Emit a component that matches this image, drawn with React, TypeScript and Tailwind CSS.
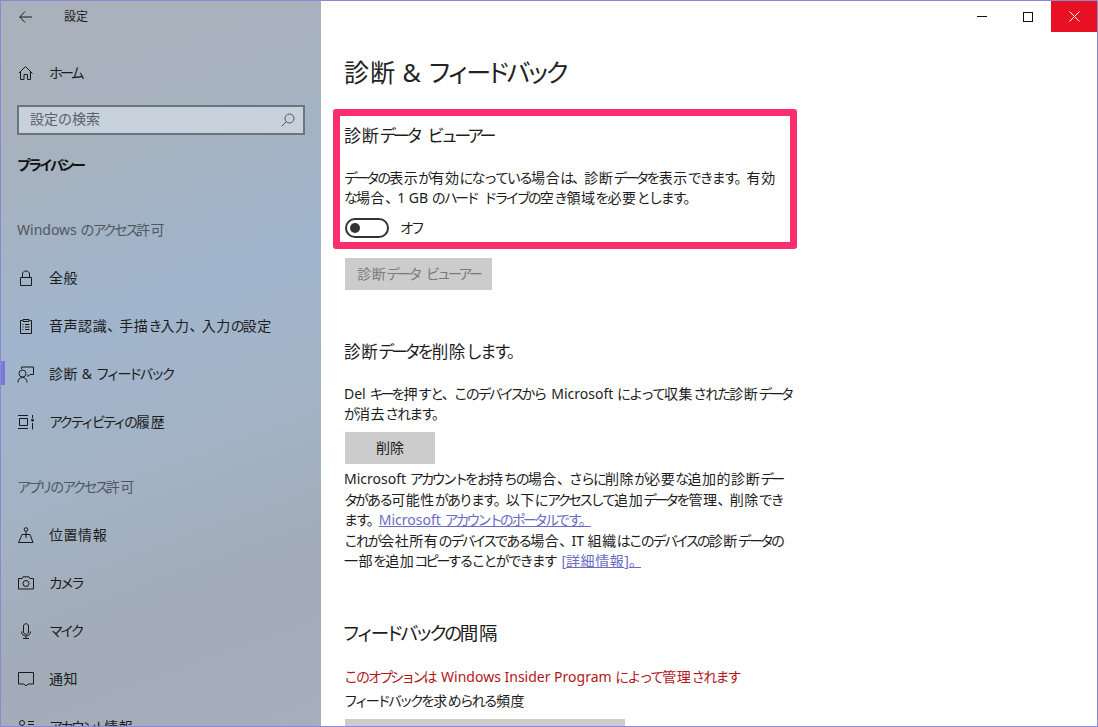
const font = 'font-["Noto_Sans","Noto_Sans_CJK_JP",sans-serif]';

// the reference font has narrow kana next to full width kanji, so kana runs get tighter tracking
const Jp = ({ t }: { t: string }) => {
  const runs = t.split(/([\u30A0-\u30FF]+|[\u3040-\u309F、。]+|[\u4E00-\u9FFF]+)/).filter(Boolean);
  return (
    <>
      {runs.map((run, i) => {
        // keep the word gap when a tightened run is followed by a space
        const gap = runs[i + 1]?.startsWith(" ");
        if (/^[\u30A0-\u30FF]/.test(run))
          return <span key={i} className={gap ? "pr-[0.2em] tracking-[-0.21em]" : "tracking-[-0.21em]"}>{run}</span>;
        if (/^[\u3040-\u309F、。]/.test(run))
          return <span key={i} className={gap ? "pr-[0.14em] tracking-[-0.14em]" : "tracking-[-0.14em]"}>{run}</span>;
        if (/^[\u4E00-\u9FFF]/.test(run))
          return <span key={i} className="tracking-[0.04em]">{run}</span>;
        return <span key={i}>{run}</span>;
      })}
    </>
  );
};

const HomeIcon = () => (
  <svg width="16" height="16" viewBox="0 0 16 16" fill="none" stroke="#1a1a1a" strokeWidth="1">
    <path d="M1 8 L7.5 1.5 L14.5 8.5 M2.5 6.8 V14.5 H6 V9.5 H9.5 V14.5 H12.5 V6.8" />
  </svg>
);
const LockIcon = () => (
  <svg width="16" height="16" viewBox="0 0 16 16" fill="none" stroke="#1a1a1a" strokeWidth="1">
    <path d="M2.5 7.5 H13.5 V15.5 H2.5 Z M4.5 7.5 V4 C4.5 0 11.5 0 11.5 4 V7.5" />
  </svg>
);
const ClipboardIcon = () => (
  <svg width="16" height="16" viewBox="0 0 16 16" fill="none" stroke="#1a1a1a" strokeWidth="1">
    <path d="M4.5 2.5 H2.5 V15.5 H13.5 V2.5 H11.5 M5 3.5 V1.5 H11 V3.5 Z M7 6.5 H11.5 M7 9 H11.5 M7 11.5 H11.5 M4.5 6.5 H5.5 M4.5 9 H5.5 M4.5 11.5 H5.5" />
  </svg>
);
const FeedbackIcon = () => (
  <svg width="17" height="17" viewBox="0 0 17 17" fill="none" stroke="#1a1a1a" strokeWidth="1">
    <path d="M4.5 3 V1 H16.5 V8.5 H13 L11 10.5 V8.5 M1 16.5 C1 13 3 11.5 5.5 11.5 C8 11.5 10 13 10 16.5" />
    <circle cx="5.5" cy="7.5" r="3.5" />
  </svg>
);
const TimelineIcon = () => (
  <svg width="16" height="16" viewBox="0 0 16 16" fill="none" stroke="#1a1a1a" strokeWidth="1">
    <path d="M0 1.5 H10 M0 14.5 H10 M1.5 4.5 H9.5 V11.5 H1.5 Z M14.5 1 V4 M14.5 9 V15.5" />
    <circle cx="14.5" cy="6.2" r="1" fill="#1a1a1a" />
  </svg>
);
const LocationIcon = () => (
  <svg width="16" height="16" viewBox="0 0 16 16" fill="none" stroke="#1a1a1a" strokeWidth="1">
    <circle cx="8" cy="2.5" r="1.8" />
    <path d="M8 4.5 V11 M4 7.5 H12 L15 15.5 H0.5 L4 7.5" />
  </svg>
);
const CameraIcon = () => (
  <svg width="16" height="14" viewBox="0 0 16 14" fill="none" stroke="#1a1a1a" strokeWidth="1">
    <path d="M0.5 2.5 H4 L5 0.8 H11 L12 2.5 H15.5 V13 H0.5 Z" />
    <circle cx="8" cy="7.5" r="3" />
  </svg>
);
const MicIcon = () => (
  <svg width="16" height="16" viewBox="0 0 16 16" fill="none" stroke="#1a1a1a" strokeWidth="1">
    <path d="M5.5 3 C5.5 0 10.5 0 10.5 3 V9 C10.5 12 5.5 12 5.5 9 Z M3.5 8.5 C3.5 14.5 12.5 14.5 12.5 8.5 M8 13 V15.5 M5 15.5 H11" />
  </svg>
);
const NotifyIcon = () => (
  <svg width="16" height="16" viewBox="0 0 16 16" fill="none" stroke="#1a1a1a" strokeWidth="1">
    <path d="M0.5 1.5 H15.5 V13 H10 L8 15 L6 13 H0.5 Z" />
  </svg>
);
const AccountIcon = () => (
  <svg width="16" height="16" viewBox="0 0 16 16" fill="none" stroke="#1a1a1a" strokeWidth="1">
    <circle cx="4" cy="4" r="2.5" />
    <path d="M0.5 12 C0.5 8 7.5 8 7.5 12 M10 2.5 H16 M10 5.5 H16 M10 8.5 H16" />
  </svg>
);

const NavItem = ({ icon, label, active }: { icon: React.ReactNode; label: string; active?: boolean }) => (
  <div className="relative flex h-12 items-center">
    {active && <span className="absolute left-0 top-[11px] h-6 w-1 bg-[#7a78d8]" />}
    <span className="flex w-[48px] shrink-0 justify-center pl-[1px]">{icon}</span>
    <span className="whitespace-pre pb-[2px] text-[14px] text-[#1c1c1c]"><Jp t={label} /></span>
  </div>
);

const SectionLabel = ({ text, className }: { text: string; className: string }) => (
  <div className={`pl-[16px] text-[14px] leading-5 text-[#4f5760] ${className}`}><Jp t={text} /></div>
);

const Link = ({ t }: { t: string }) => (
  <span className="text-[#6b6bc4] underline"><Jp t={t} /></span>
);

export default function App() {
  return (
    <div className={`flex h-[727px] w-[1098px] overflow-hidden border border-[#8a8ad2] ${font}`}>
      <aside className="flex w-[320px] shrink-0 flex-col overflow-hidden bg-[linear-gradient(160deg,#a9b1ba_0%,#a6b2bf_22%,#a0b5cd_42%,#a3b3c6_58%,#a2acb8_80%,#a6aebb_100%)]">
        <div className="flex h-[32px] shrink-0 items-center">
          <svg className="ml-[18px]" width="13" height="12" viewBox="0 0 13 12" fill="none" stroke="#1a1a1a" strokeWidth="1">
            <path d="M6 0.5 L0.8 6 L6 11.5 M0.8 6 H13" />
          </svg>
          <span className="ml-[32px] text-[12px] text-[#1c1c1c]">設定</span>
        </div>
        <div className="mt-[16px]">
          <NavItem icon={<HomeIcon />} label="ホーム" />
        </div>
        <div className="mx-[16px] mt-[8px] flex h-[30px] shrink-0 items-center justify-between border-2 border-[#6c747d] bg-[#c7d1dc] pl-[11px] pr-[8px]">
          <span className="pb-[3px] text-[14px] text-[#59616b]">設定の検索</span>
          <svg width="14" height="14" viewBox="0 0 14 14" fill="none" stroke="#4f5760" strokeWidth="1">
            <circle cx="8.5" cy="5.5" r="4.5" />
            <path d="M5.2 8.8 L0.7 13.3" />
          </svg>
        </div>
        <div className="mt-[20px] pl-[16px] text-[14px] font-bold leading-5 text-[#111]"><Jp t="プライバシー" /></div>
        <SectionLabel text="Windows のアクセス許可" className="mt-[45px]" />
        <div className="mt-[14px]">
          <NavItem icon={<LockIcon />} label="全般" />
          <NavItem icon={<ClipboardIcon />} label="音声認識、手描き入力、入力の設定" />
          <NavItem icon={<FeedbackIcon />} label="診断 & フィードバック" active />
          <NavItem icon={<TimelineIcon />} label="アクティビティの履歴" />
        </div>
        <SectionLabel text="アプリのアクセス許可" className="mt-[31px]" />
        <div className="mt-[14px]">
          <NavItem icon={<LocationIcon />} label="位置情報" />
          <NavItem icon={<CameraIcon />} label="カメラ" />
          <NavItem icon={<MicIcon />} label="マイク" />
          <NavItem icon={<NotifyIcon />} label="通知" />
          <NavItem icon={<AccountIcon />} label="アカウント情報" />
        </div>
      </aside>

      <main className="relative flex-1 overflow-hidden bg-white text-[#1c1c1c]">
        <div className="flex h-[31px] justify-end">
          <div className="flex w-[46px] items-center justify-center">
            <span className="h-px w-[10px] bg-[#111]" />
          </div>
          <div className="flex w-[46px] items-center justify-center">
            <span className="h-[10px] w-[10px] border border-[#111]" />
          </div>
          <div className="flex w-[46px] items-center justify-center bg-[#e81123]">
            <svg width="11" height="11" viewBox="0 0 11 11" stroke="#fff" strokeWidth="1">
              <path d="M0.5 0.5 L10.5 10.5 M10.5 0.5 L0.5 10.5" />
            </svg>
          </div>
        </div>

        <div className="w-[480px] whitespace-nowrap pl-[23px]">
          <h1 className="mt-[15px] text-[25px] font-normal leading-[50px] text-[#222]"><Jp t="診断 & フィードバック" /></h1>

          <h2 className="mt-[27px] text-[17px] font-normal leading-6"><Jp t="診断データ ビューアー" /></h2>
          <p className="mt-[20px] text-[14px] leading-[20px]">
            <Jp t="データの表示が有効になっている場合は、診断データを表示できます。有効" />
            <br />
            <Jp t="な場合、1 GB のハード ドライブの空き領域を必要とします。" />
          </p>
          <div className="ml-px mt-[10px] flex items-center">
            <span className="flex h-[20px] w-[44px] items-center rounded-full border-2 border-[#333] pl-[3px]">
              <span className="h-[10px] w-[10px] rounded-full bg-[#333]" />
            </span>
            <span className="ml-[11px] text-[14px] leading-5"><Jp t="オフ" /></span>
          </div>
          <div className="ml-px mt-[20px] flex h-8 w-[147px] items-center justify-center bg-[#cccccc] text-[14px] text-[#7a7a7a]">
            <span className="pb-[2px]"><Jp t="診断データ ビューアー" /></span>
          </div>

          <h2 className="mt-[49px] text-[16.5px] font-normal leading-[26px]"><Jp t="診断データを削除します。" /></h2>
          <p className="mt-[19px] text-[14px] leading-[20px]">
            <Jp t="Del キーを押すと、このデバイスから Microsoft によって収集された診断データ" />
            <br />
            <Jp t="が消去されます。" />
          </p>
          <div className="ml-px mt-[8px] flex h-8 w-[90px] items-center justify-center bg-[#cccccc] pb-[2px] text-[14px]">削除</div>
          <p className="mt-[5px] text-[14px] leading-[20.5px]">
            <Jp t="Microsoft アカウントをお持ちの場合、さらに削除が必要な追加的診断デー" />
            <br />
            <Jp t="タがある可能性があります。以下にアクセスして追加データを管理、削除でき" />
            <br />
            <Jp t="ます。" /><Link t="Microsoft アカウントのポータルです。" />
            <br />
            <Jp t="これが会社所有のデバイスである場合、IT 組織はこのデバイスの診断データの" />
            <br />
            <Jp t="一部を追加コピーすることができます " /><Link t="[詳細情報]。" />
          </p>

          <h2 className="mt-[48px] -ml-[2px] text-[18.5px] font-normal leading-[26px]"><Jp t="フィードバックの間隔" /></h2>
          <p className="mt-[21px] text-[14px] leading-5 text-[#b3161b]"><Jp t="このオプションは Windows Insider Program によって管理されます" /></p>
          <p className="mt-[4px] text-[14px] leading-5"><Jp t="フィードバックを求められる頻度" /></p>
          <div className="ml-px mt-[8px] h-8 w-[280px] bg-[#cccccc]" />
        </div>

        {/* annotation frame drawn over the page */}
        <div className="pointer-events-none absolute left-[12px] top-[108px] h-[140px] w-[464px] rounded-[3px] border-[7px] border-[#fb2f6d]" />
      </main>
    </div>
  );
}
